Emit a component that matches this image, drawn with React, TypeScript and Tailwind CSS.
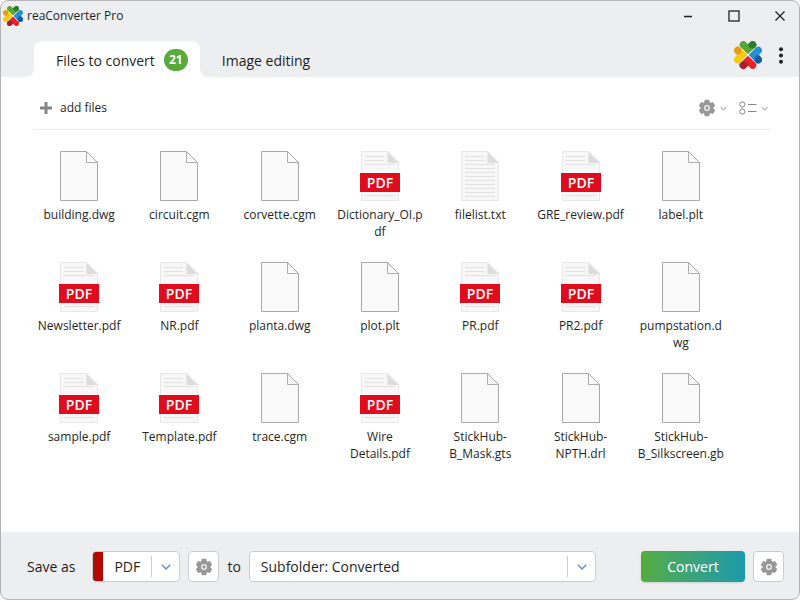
import { useState } from 'react';

type FileKind = 'blank' | 'pdf' | 'text';

interface FileEntry {
  name: string;
  kind: FileKind;
}

const files: FileEntry[] = [
  { name: 'building.dwg', kind: 'blank' },
  { name: 'circuit.cgm', kind: 'blank' },
  { name: 'corvette.cgm', kind: 'blank' },
  { name: 'Dictionary_OI.pdf', kind: 'pdf' },
  { name: 'filelist.txt', kind: 'text' },
  { name: 'GRE_review.pdf', kind: 'pdf' },
  { name: 'label.plt', kind: 'blank' },
  { name: 'Newsletter.pdf', kind: 'pdf' },
  { name: 'NR.pdf', kind: 'pdf' },
  { name: 'planta.dwg', kind: 'blank' },
  { name: 'plot.plt', kind: 'blank' },
  { name: 'PR.pdf', kind: 'pdf' },
  { name: 'PR2.pdf', kind: 'pdf' },
  { name: 'pumpstation.dwg', kind: 'blank' },
  { name: 'sample.pdf', kind: 'pdf' },
  { name: 'Template.pdf', kind: 'pdf' },
  { name: 'trace.cgm', kind: 'blank' },
  { name: 'Wire Details.pdf', kind: 'pdf' },
  { name: 'StickHub-B_Mask.gts', kind: 'blank' },
  { name: 'StickHub-NPTH.drl', kind: 'blank' },
  { name: 'StickHub-B_Silkscreen.gb', kind: 'blank' },
];

const petals = [
  { angle: 0, light: '#55a83b', dark: '#2d7d2a' },
  { angle: 90, light: '#2490d4', dark: '#0c5f9f' },
  { angle: 180, light: '#e3242b', dark: '#ac1f27' },
  { angle: 270, light: '#fbc90d', dark: '#e89a1c' },
];

const Logo = ({ className }: { className: string }) => (
  <svg viewBox="1 1 30 30" className={className} aria-hidden="true">
    <path d="M8 8 L24 24 M24 8 L8 24" stroke="#ffffff" strokeWidth="2" />
    {petals.map((p) => (
      <g key={p.angle} transform={`rotate(${p.angle} 16 16)`}>
        <path
          d="M16 15.2 L7.8 7.3 A3.9 3.9 0 0 1 13.2 1.8 L16 4.4 L18.8 1.8 A3.9 3.9 0 0 1 24.2 7.3 Z"
          fill={p.light}
        />
        <path d="M16 4.4 L18.8 1.8 A3.9 3.9 0 0 1 24.2 7.3 L22.6 8.8 Q17 10 16 4.4 Z" fill={p.dark} />
      </g>
    ))}
  </svg>
);

const Gear = () => (
  <svg viewBox="0 0 18 18" className="size-[18px] fill-[#979797]" aria-hidden="true">
    <circle cx="9" cy="9" r="6.5" />
    <rect x="6.4" y="0.8" width="5.2" height="16.4" rx="1.2" />
    <rect x="6.4" y="0.8" width="5.2" height="16.4" rx="1.2" transform="rotate(60 9 9)" />
    <rect x="6.4" y="0.8" width="5.2" height="16.4" rx="1.2" transform="rotate(120 9 9)" />
    <circle cx="9" cy="9" r="2.3" fill="none" stroke="#f4f4f4" strokeWidth="1.3" />
  </svg>
);

const Chevron = ({ className }: { className: string }) => (
  <svg viewBox="0 0 10 6" className={className} fill="none" stroke="currentColor" strokeWidth="1.4" aria-hidden="true">
    <path d="M0.8 0.8 L5 5 L9.2 0.8" />
  </svg>
);

const FileIcon = ({ kind }: { kind: FileKind }) => {
  if (kind === 'blank') {
    return (
      <svg viewBox="0 0 40 50" className="h-[50px] w-10" aria-hidden="true">
        <path d="M1.5 0.5 H27.5 L38.5 11.5 V49.5 H1.5 Z" fill="#f9f9f9" />
        <path d="M27.5 0.5 V11.5 H38.5" fill="none" stroke="#adadad" />
        <path d="M1.5 0.5 H27.5 L38.5 11.5 V49.5 H1.5 Z" fill="none" stroke="#a8a8a8" />
      </svg>
    );
  }

  const lines = kind === 'pdf' ? [5, 9, 13, 44] : [5, 9, 13, 17, 21, 25, 29, 33, 37, 41, 45];
  return (
    <svg viewBox="0 0 40 50" className="h-[50px] w-10" aria-hidden="true">
      <path d="M1.5 0.5 H28 L38.5 11 V49.5 H1.5 Z" fill="#f7f7f7" stroke="#e8e8e8" />
      {lines.map((y) => (
        <path key={y} d={`M5 ${y + 0.5} H${y < 13 ? 24 : 35}`} stroke="#e2e2e2" />
      ))}
      <path d="M27.5 1 V12 H38.5 Z" fill="#dcdcdc" />
      {kind === 'pdf' && (
        <>
          <rect x="0" y="22" width="40" height="19" fill="#e00b1c" />
          <text
            x="20"
            y="37"
            textAnchor="middle"
            fill="#ffffff"
            className="font-['Open_Sans',sans-serif] text-[14px] font-semibold"
          >
            PDF
          </text>
        </>
      )}
    </svg>
  );
};

const SettingsButton = ({ label }: { label: string }) => (
  <button
    type="button"
    aria-label={label}
    className="flex size-[31px] shrink-0 items-center justify-center rounded border border-[#c9cbcd] bg-white"
  >
    <Gear />
  </button>
);

export default function App() {
  const [tab, setTab] = useState('files');
  const [format, setFormat] = useState('PDF');
  const [target, setTarget] = useState('converted');

  return (
    <div className="flex min-h-screen flex-col overflow-hidden rounded-lg border border-[#b3b5b7] bg-[#eceef0] font-['Open_Sans','Noto_Sans',sans-serif] text-[#1f1f1f]">
      <header>
        <div className="flex h-[30px] items-center pl-0.5">
          <Logo className="size-5" />
          <h1 className="ml-1 text-[12px]">reaConverter Pro</h1>
          <div className="ml-auto flex h-full gap-2">
            <button type="button" aria-label="Minimize" className="flex w-[38px] items-center justify-center">
              <svg viewBox="0 0 12 12" className="size-3" stroke="#222222" strokeWidth="1.3" aria-hidden="true">
                <path d="M2 6.5 H10" />
              </svg>
            </button>
            <button type="button" aria-label="Maximize" className="flex w-[38px] items-center justify-center">
              <svg viewBox="0 0 12 12" className="size-3" fill="none" stroke="#222222" strokeWidth="1.3" aria-hidden="true">
                <rect x="1" y="1" width="10" height="10" />
              </svg>
            </button>
            <button type="button" aria-label="Close" className="flex w-[38px] items-center justify-center">
              <svg viewBox="0 0 12 12" className="size-3" stroke="#222222" strokeWidth="1.3" aria-hidden="true">
                <path d="M1.5 1.5 L10.5 10.5 M10.5 1.5 L1.5 10.5" />
              </svg>
            </button>
          </div>
        </div>

        <div className="flex items-end justify-between pl-[33px]">
          <nav className="flex">
            <button
              type="button"
              onClick={() => setTab('files')}
              aria-pressed={tab === 'files'}
              className="relative flex h-9 items-center gap-[9px] rounded-t-lg bg-white pt-0.5 pr-3 pl-[22px] text-[14px]"
            >
              <span className="absolute bottom-0 -left-2 size-2 overflow-hidden bg-white">
                <span className="block size-2 rounded-br-lg bg-[#eceef0]" />
              </span>
              <span className="absolute -right-2 bottom-0 size-2 overflow-hidden bg-white">
                <span className="block size-2 rounded-bl-lg bg-[#eceef0]" />
              </span>
              Files to convert
              <span className="flex h-[22px] w-6 items-center justify-center rounded-full bg-[#58ab3a] text-[12px] font-bold text-white">
                21
              </span>
            </button>
            <button
              type="button"
              onClick={() => setTab('editing')}
              aria-pressed={tab === 'editing'}
              className="h-9 px-[22px] pt-0.5 text-[14px]"
            >
              Image editing
            </button>
          </nav>
          <div className="flex h-[46px] items-start gap-4 pt-2.5 pr-[15px]">
            <Logo className="size-7" />
            <button type="button" aria-label="Menu" className="pt-1.5">
              <svg viewBox="0 0 6 18" className="h-[18px] w-1.5 fill-[#222222]" aria-hidden="true">
                <circle cx="3" cy="2.2" r="2" />
                <circle cx="3" cy="8.5" r="2" />
                <circle cx="3" cy="14.8" r="2" />
              </svg>
            </button>
          </div>
        </div>
      </header>

      <main className="flex-1 bg-white px-7 pb-4">
        <div className="ml-1 flex h-[53px] items-center justify-between border-b border-[#ebebeb] pt-2.5 pl-1.5 text-[12px]">
          <button type="button" className="flex items-center gap-[7px]">
            <svg viewBox="0 0 14 14" className="size-[14px]" stroke="#858585" strokeWidth="3" aria-hidden="true">
              <path d="M7 1 V13 M1 7 H13" />
            </svg>
            add files
          </button>
          <div className="flex items-center gap-3 pr-[3px] text-[#858585]">
            <button type="button" aria-label="List settings" className="flex items-center gap-1">
              <Gear />
              <Chevron className="h-[5px] w-[7px]" />
            </button>
            <button type="button" aria-label="View mode" className="flex items-center gap-1">
              <svg viewBox="0 0 18 14" className="h-[14px] w-[18px]" fill="none" stroke="currentColor" aria-hidden="true">
                <circle cx="3.3" cy="3.5" r="2.6" />
                <circle cx="3.3" cy="10.5" r="2.6" />
                <path d="M9 3.5 H17.5 M9 10.5 H17.5" />
              </svg>
              <Chevron className="h-[5px] w-[7px]" />
            </button>
          </div>
        </div>

        <ul className="grid auto-rows-[111px] grid-cols-[repeat(auto-fill,minmax(100px,1fr))] pt-[21px] pr-10">
          {files.map((file) => (
            <li key={file.name} className="flex flex-col items-center">
              <FileIcon kind={file.kind} />
              <span className="mt-[5px] w-[88px] text-center text-[12px] leading-[17px] wrap-break-word">
                {file.name}
              </span>
            </li>
          ))}
        </ul>
      </main>

      <footer className="flex h-[67px] items-center pt-0.5 pr-[15px] pl-[26px] text-[14px]">
        <label htmlFor="format" className="shrink-0">
          Save as
        </label>
        <div className="relative ml-[17px] flex h-[31px] w-[88px] shrink-0 overflow-hidden rounded border border-[#c9cbcd] bg-white">
          <span className="w-2.5 shrink-0 bg-[#b30a02]" />
          <select
            id="format"
            value={format}
            onChange={(e) => setFormat(e.target.value)}
            className="w-full appearance-none pl-[11px] outline-none"
          >
            <option>PDF</option>
            <option>PNG</option>
            <option>SVG</option>
          </select>
          <span className="pointer-events-none absolute inset-y-1 right-0 flex w-7 items-center justify-center border-l border-[#c9cbcd] text-[#5b8bd9]">
            <Chevron className="h-1.5 w-2.5" />
          </span>
        </div>
        <div className="ml-2">
          <SettingsButton label="Format settings" />
        </div>
        <label htmlFor="target" className="mx-2 shrink-0">
          to
        </label>
        <div className="relative flex h-[31px] min-w-0 flex-1 rounded border border-[#c9cbcd] bg-white">
          <select
            id="target"
            value={target}
            onChange={(e) => setTarget(e.target.value)}
            className="w-full appearance-none pl-[11px] outline-none"
          >
            <option value="converted">Subfolder: Converted</option>
            <option value="source">Source folder</option>
          </select>
          <span className="pointer-events-none absolute inset-y-1 right-0 flex w-7 items-center justify-center border-l border-[#c9cbcd] text-[#5b8bd9]">
            <Chevron className="h-1.5 w-2.5" />
          </span>
        </div>
        <button
          type="button"
          className="mr-2 ml-[45px] h-[31px] w-[104px] shrink-0 rounded bg-linear-to-r from-[#55ac3a] to-[#1c98ab] text-[14px] text-white shadow-sm"
        >
          Convert
        </button>
        <SettingsButton label="Conversion settings" />
      </footer>
    </div>
  );
}
